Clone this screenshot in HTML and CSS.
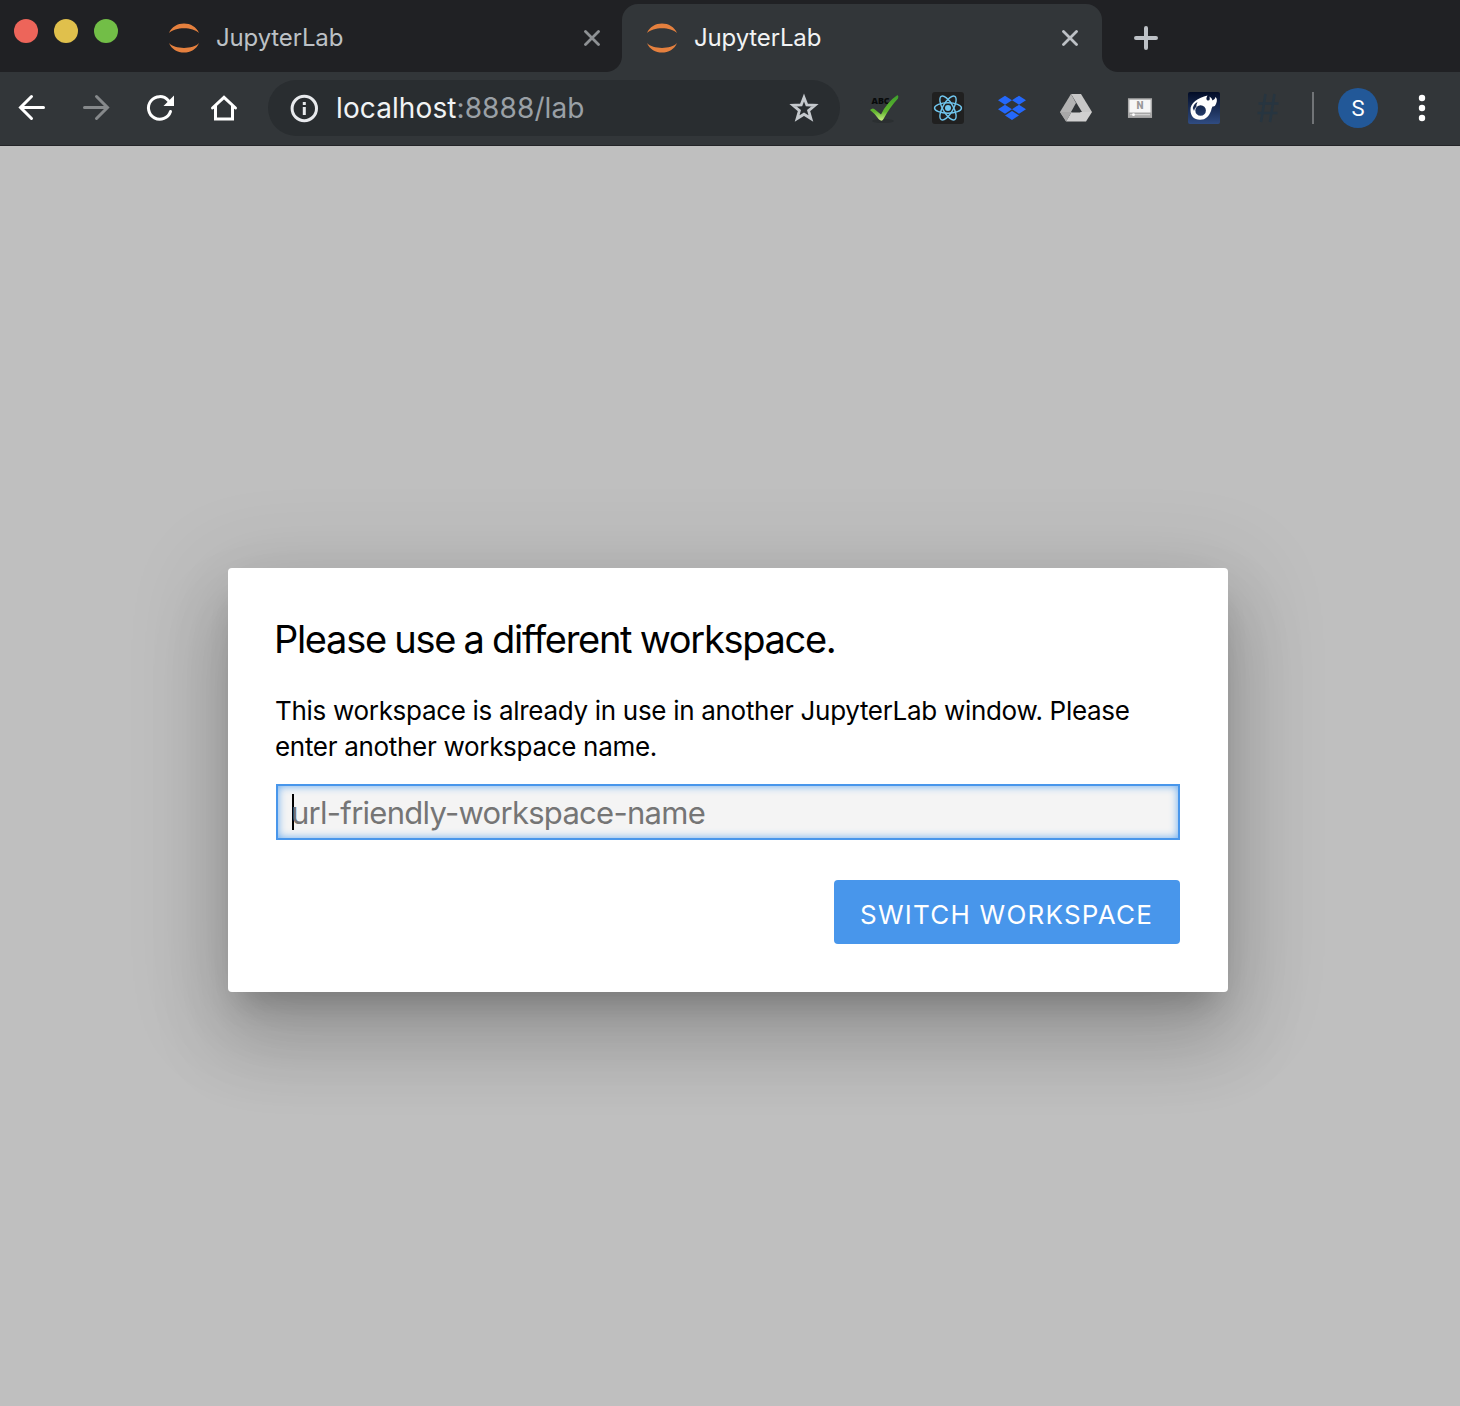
FILE: index.html
```html
<!DOCTYPE html>
<html lang="en">
<head>
<meta charset="utf-8">
<title>JupyterLab</title>
<link rel="stylesheet" href="styles.css">
</head>
<body>
<div class="browser">
  <div class="tabstrip">
    <div class="lights"><i class="light red"></i><i class="light yellow"></i><i class="light green"></i></div>
    <div class="tab">
      <svg class="favicon" viewBox="0 0 32 32"><path d="M1 11C7 4.500 25 4.500 31 11C26-1.800 6-1.800 1 11ZM1 21C7 27.500 25 27.500 31 21C26 33.800 6 33.800 1 21Z"/></svg>
      <span class="tab-title">JupyterLab</span>
      <svg class="close" viewBox="0 0 16 16"><path d="M1.500 1.500l13 13M14.500 1.500L1.500 14.500"/></svg>
    </div>
    <div class="tab active">
      <svg class="favicon" viewBox="0 0 32 32"><path d="M1 11C7 4.500 25 4.500 31 11C26-1.800 6-1.800 1 11ZM1 21C7 27.500 25 27.500 31 21C26 33.800 6 33.800 1 21Z"/></svg>
      <span class="tab-title">JupyterLab</span>
      <svg class="close" viewBox="0 0 16 16"><path d="M1.500 1.500l13 13M14.500 1.500L1.500 14.500"/></svg>
    </div>
    <svg class="newtab" viewBox="0 0 24 24"><path d="M12 2v20M2 12h20"/></svg>
  </div>
  <div class="toolbar">
    <svg class="nav" viewBox="0 0 32 32"><path d="M27.500 15.500H5M15.500 4.500L4.500 15.500L15.500 26.500"/></svg>
    <svg class="nav dim" viewBox="0 0 32 32"><path d="M4.500 15.500H27M16.500 4.500L27.500 15.500L16.500 26.500"/></svg>
    <svg class="nav" viewBox="0 0 32 32"><path d="M26.500 19.500A11.300 11.300 0 1 1 24.300 8.500"/><path class="solid" d="M30 3.500V14H19.500Z"/></svg>
    <svg class="nav" viewBox="0 0 32 32"><path d="M7.500 14V27H24.500V14M4.500 16L16 5.300L27.500 16"/></svg>
    <div class="omnibox">
      <svg class="info" viewBox="0 0 32 32"><circle cx="16.300" cy="16.500" r="12.200"/><path d="M16.300 15v8M16.300 10v3"/></svg>
      <span class="url"><b>localhost</b>:8888/lab</span>
      <svg class="star" viewBox="0 0 32 32"><path d="M16 5.500L18.800 12.800L27 13.300L20.600 18.600L22.900 26.500L16 22.200L9.100 26.500L11.400 18.600L5 13.300L13.200 12.800Z"/></svg>
    </div>
    <div class="extensions">
      <svg class="ext" viewBox="0 0 32 32">
        <defs><linearGradient id="check" x1="0" y1="0" x2="0" y2="1"><stop offset="0" stop-color="#3d9f2c"/><stop offset=".65" stop-color="#62b52f"/><stop offset="1" stop-color="#c8ef82"/></linearGradient></defs>
        <ellipse cx="15" cy="29" rx="11" ry="2" fill="#2b2f31"/>
        <text class="abc" x="3.500" y="12">ABC</text>
        <path d="M2 18Q5 15 7.500 18L13 22.500Q19 10 29.500 3Q31 4 30 6.500Q22 15 15.500 27Q14 30 11 27.500Q7.500 22 2 18Z" fill="url(#check)"/>
      </svg>
      <svg class="ext" viewBox="0 0 32 32">
        <rect width="32" height="32" rx="3" fill="#202020"/>
        <g fill="none" stroke="#70c6ee" stroke-width="1.400"><ellipse cx="16" cy="16" rx="13.500" ry="5.200"/><ellipse cx="16" cy="16" rx="13.500" ry="5.200" transform="rotate(60 16 16)"/><ellipse cx="16" cy="16" rx="13.500" ry="5.200" transform="rotate(120 16 16)"/></g><circle cx="16" cy="16" r="3" fill="#70c6ee"/>
      </svg>
      <svg class="ext" viewBox="0 0 32 32"><path fill="#2468fb" d="M9 3.700L16 8.200L9 12.700L2 8.200ZM23 3.700L30 8.200L23 12.700L16 8.200ZM9 12.700L16 17.200L9 21.700L2 17.200ZM23 12.700L30 17.200L23 21.700L16 17.200ZM16 19L23 23.400L16 28L9 23.400Z"/></svg>
      <svg class="ext" viewBox="0 0 32 32"><path fill="#c7c7c7" d="M11 2H21L32 20H22Z"/><path fill="#b3b3b3" d="M11 2L16 11L6 29L0 20Z"/><path fill="#d0d0d0" d="M11.500 20H32L26 29.500H6Z"/><path fill="#a8a8a8" d="M0 20L11.500 20L6 29.500Z"/><path fill="#323639" d="M16 13L20.500 20.500H11.500Z"/></svg>
      <svg class="ext" viewBox="0 0 32 32"><rect x="4.700" y="7" width="22.600" height="18" fill="#f6f6f6" stroke="#aaa" stroke-width="1.500"/><path fill="#a7a7a7" d="M4 20.500H28V25.700H4Z"/><path d="M6 22.700h20" stroke="#ddd"/><circle cx="9.500" cy="22.700" r="1.400" fill="#fff"/><text class="n" x="16" y="17.300">N</text></svg>
      <svg class="ext" viewBox="0 0 32 32">
        <defs><linearGradient id="night" x1="0" y1="0" x2="0" y2="1"><stop stop-color="#020c26"/><stop offset="1" stop-color="#304c82"/></linearGradient></defs>
        <rect width="32" height="32" rx="2" fill="url(#night)"/>
        <path fill="#fff" fill-rule="evenodd" d="M2.500 18C2 11 10 6 19.500 3.500C18 6 18 7.500 19.500 8.500C22 9 22 7 21.500 4.500Q24 6 24.500 8.500Q27 8 27.500 5Q30 7 28 12Q27 15 24.500 14.500Q23.500 16 23 19C21 24 18 27.800 12 27.800C6 27.800 2.500 24 2.500 18ZM7.300 18.500A5.300 5.300 0 1 0 17.900 18.500A5.300 5.300 0 1 0 7.300 18.500ZM4.800 16Q6 11.500 9.500 10Q8 13 8.500 14.500Q6.500 16 6 19Z"/>
      </svg>
      <svg class="ext" viewBox="0 0 32 32"><path d="M13.500 2L9 30M22.500 2L18 30M6.500 11.500H26.500M5.500 21H25.500" stroke="#273540" stroke-width="2.600" fill="none"/></svg>
    </div>
    <div class="divider"></div>
    <div class="avatar">S</div>
    <svg class="menu" viewBox="0 0 8 28"><circle cx="4" cy="4" r="3.200"/><circle cx="4" cy="14" r="3.200"/><circle cx="4" cy="24" r="3.200"/></svg>
  </div>
  <main class="page">
    <section class="dialog">
      <h1 class="dialog-title">Please use a different workspace.</h1>
      <p class="message">This workspace is already in use in another JupyterLab window. Please<br>enter another workspace name.</p>
      <div class="field"><i class="caret"></i><span class="placeholder">url-friendly-workspace-name</span></div>
      <div class="actions"><button class="accept">SWITCH WORKSPACE</button></div>
    </section>
  </main>
</div>
</body>
</html>
```
FILE: styles.css
```css
* { box-sizing: border-box; }
body { margin: 0; font-family: Inter, "Liberation Sans", sans-serif; }
svg { display: block; flex: none; }
.browser { display: flex; flex-direction: column; width: 1460px; height: 1406px; overflow: hidden; background: #bfbfbf; }

.tabstrip { display: flex; align-items: flex-end; height: 72px; background: #202124; }
.lights { display: flex; gap: 16px; width: 144px; height: 72px; padding: 19px 0 0 14px; }
.light { width: 24px; height: 24px; border-radius: 50%; }
.red { background: #ed655a; }
.yellow { background: #e0c04c; }
.green { background: #72be47; }
.tab { position: relative; display: flex; align-items: center; width: 478px; height: 68px; padding: 0 22px 0 24px; color: #bdc1c6; }
.tab.active { width: 480px; padding-right: 24px; background: #323639; border-radius: 16px 16px 0 0; color: #f1f3f4; }
.tab.active::before, .tab.active::after { content: ""; position: absolute; bottom: 0; width: 16px; height: 16px; }
.tab.active::before { left: -16px; background: radial-gradient(circle at 0 0, transparent 15.5px, #323639 16.5px); }
.tab.active::after { right: -16px; background: radial-gradient(circle at 100% 0, transparent 15.5px, #323639 16.5px); }
.favicon { width: 32px; height: 32px; fill: #e5803e; }
.tab-title { flex: 1; margin-left: 16px; font-size: 24px; line-height: 32px; letter-spacing: -0.15px; }
.close { width: 16px; height: 16px; fill: none; stroke: #8e9194; stroke-width: 2.8; stroke-linecap: round; }
.active .close { stroke: #bdc1c6; }
.newtab { width: 24px; height: 24px; margin: 0 0 22px 32px; fill: none; stroke: #bdc1c6; stroke-width: 4; stroke-linecap: round; }

.toolbar { display: flex; align-items: center; height: 74px; padding: 0 0 1px 16px; background: #323639; border-bottom: 1px solid #242528; }
.nav { width: 32px; height: 32px; margin-right: 32px; fill: none; stroke: #fff; stroke-width: 3; stroke-linecap: round; }
.nav.dim { stroke: #86898b; }
.nav .solid { fill: #fff; stroke: none; }
.omnibox { display: flex; align-items: center; width: 572px; height: 56px; margin-left: -4px; padding: 0 20px; border-radius: 28px; background: #292d30; }
.info { width: 32px; height: 32px; fill: none; stroke: #e8eaed; stroke-width: 3; }
.url { flex: 1; margin-left: 16px; color: #9aa0a6; font-size: 28px; line-height: 36px; letter-spacing: 0.1px; }
.url b { color: #f1f3f4; font-weight: 400; }
.star { width: 32px; height: 32px; fill: none; stroke: #c5c9cd; stroke-width: 2.8; }
.extensions { display: flex; gap: 32px; margin-left: 28px; }
.ext { width: 32px; height: 32px; }
.abc { font: 800 8.8px "Open Sans", sans-serif; fill: #080a0b; }
.n { font: 900 10px Roboto, sans-serif; fill: #999; text-anchor: middle; }
.divider { width: 2px; height: 32px; margin-left: 28px; background: #717477; }
.avatar { width: 40px; height: 40px; margin-left: 24px; border-radius: 50%; background: #225898; color: #fff; font: 22px/41px Roboto, sans-serif; text-align: center; }
.menu { width: 8px; height: 28px; margin-left: 40px; fill: #fff; }

.page { flex: 1; padding: 422px 0 0 228px; }
.dialog { width: 1000px; height: 424px; padding: 47px 48px 48px; border-radius: 4px; background: #fff; color: #000; box-shadow: 0 22px 30px -14px rgba(0,0,0,.2), 0 48px 76px 6px rgba(0,0,0,.14), 0 18px 92px 16px rgba(0,0,0,.12); }
.dialog-title { margin: 0 0 30px -2px; font-size: 38px; font-weight: 400; line-height: 48px; letter-spacing: -1.3px; word-spacing: -0.9px; white-space: nowrap; }
.message { margin: 0 0 19px -1px; font-size: 26px; line-height: 36px; letter-spacing: -0.305px; white-space: nowrap; }
.field { display: flex; align-items: center; height: 56px; padding-left: 14px; border: 2px solid #4896eb; background: #f4f4f4; box-shadow: inset 0 0 8px #64a9f0; }
.caret { width: 2px; height: 36px; margin-right: -3px; background: #000; }
.placeholder { color: #757575; font-size: 31px; letter-spacing: -0.72px; white-space: nowrap; }
.actions { display: flex; justify-content: flex-end; margin-top: 40px; }
.accept { width: 346px; height: 64px; padding: 6px 0 0 26px; border: 0; border-radius: 4px; background: #4896eb; color: #fff; font: 26px/32px Inter, sans-serif; letter-spacing: 1.23px; text-align: left; white-space: nowrap; }
```
